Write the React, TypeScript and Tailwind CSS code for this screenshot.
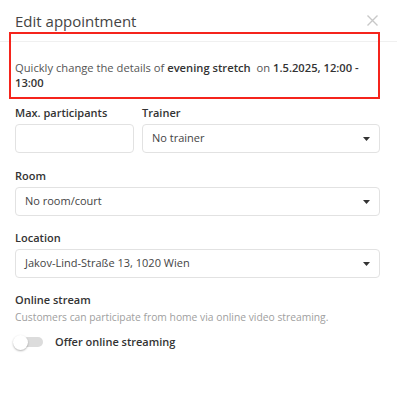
import { useState } from "react"

function Caret() {
  return (
    <svg width="7" height="4" viewBox="0 0 7 4" className="shrink-0">
      <path d="M0 0 L7 0 L3.5 4 Z" fill="#333" />
    </svg>
  )
}

function SelectBox({ value }: { value: string }) {
  return (
    <div className="flex h-[29px] w-full items-center justify-between rounded-[4px] border border-[#e2e2e2] bg-white pl-[9px] pr-[9px] text-[11px] text-[#444]">
      <span>{value}</span>
      <Caret />
    </div>
  )
}

function Label({ children }: { children: React.ReactNode }) {
  return (
    <div className="mb-[3px] text-[11px] font-semibold leading-[16px] text-[#333]">
      {children}
    </div>
  )
}

export default function App() {
  const [streaming, setStreaming] = useState(false)

  return (
    <div
      className="relative h-[417px] w-[397px] overflow-hidden bg-white"
      style={{ fontFamily: '"Open Sans", "Noto Sans", sans-serif' }}
    >
      <div className="flex h-[42px] items-center justify-between border-b border-[#f0f0f0] pl-[15px] pr-[19px]">
        <h2 className="text-[15px] font-normal leading-[22px] text-[#444]">Edit appointment</h2>
        <svg width="11" height="11" viewBox="0 0 11 11">
          <path d="M0.5 0.5 L10.5 10.5 M10.5 0.5 L0.5 10.5" stroke="#c8c8c8" strokeWidth="1.4" />
        </svg>
      </div>

      <div className="pl-[15px] pr-[17px] pt-[18px]">
        <p className="text-[11.2px] leading-[15px] text-[#555]">
          Quickly change the details of <b className="font-semibold text-[#333]">evening stretch</b>
          {"\u00a0 on "}
          <b className="font-semibold text-[#333]">1.5.2025, 12:00 - 13:00</b>
        </p>

        <div className="mt-[15px] flex gap-[8px]">
          <div className="w-[119px]">
            <Label>Max. participants</Label>
            <input
              type="text"
              className="h-[29px] w-full rounded-[4px] border border-[#e2e2e2] px-[9px] text-[11px] outline-none"
            />
          </div>
          <div className="flex-1">
            <Label>Trainer</Label>
            <SelectBox value="No trainer" />
          </div>
        </div>

        <div className="mt-[15px]">
          <Label>Room</Label>
          <SelectBox value="No room/court" />
        </div>

        <div className="mt-[14px]">
          <Label>Location</Label>
          <SelectBox value="Jakov-Lind-Straße 13, 1020 Wien" />
        </div>

        <div className="mt-[14px]">
          <div className="text-[11px] font-semibold leading-[16px] text-[#333]">Online stream</div>
          <div className="mt-[2px] text-[10.3px] leading-[15px] text-[#a0a0a0]">
            Customers can participate from home via online video streaming.
          </div>
          <div className="mt-[8px] flex h-[18px] items-center gap-[12px]">
            <button
              type="button"
              onClick={() => setStreaming(!streaming)}
              className="relative h-[10px] w-[28px] rounded-full bg-[#dcdcdc]"
            >
              <span className="absolute left-[-2px] top-[-2.5px] h-[15px] w-[15px] rounded-full bg-white shadow-[0_1px_2px_rgba(0,0,0,0.3)]" />
            </button>
            <span className="text-[11px] font-semibold text-[#333]">Offer online streaming</span>
          </div>
        </div>
      </div>

      <div className="pointer-events-none absolute left-[9px] top-[32px] h-[67px] w-[371px] border-2 border-[#f5241c]" />
    </div>
  )
}
